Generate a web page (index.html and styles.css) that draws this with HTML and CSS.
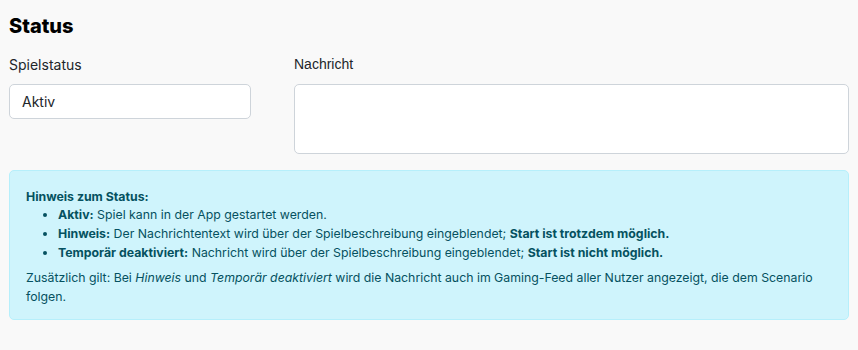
FILE: index.html
```html
<!DOCTYPE html>
<html lang="de">
<head>
  <meta charset="UTF-8">
  <meta name="viewport" content="width=device-width, initial-scale=1.0">
  <title>Status</title>
  <link rel="stylesheet" href="styles.css">
</head>
<body>
  <section class="status">
    <h2>Status</h2>

    <div class="felder">
      <div class="feld">
        <label for="spielstatus">Spielstatus</label>
        <div class="eingabe" id="spielstatus">Aktiv</div>
      </div>
      <div class="feld">
        <label class="label-nachricht" for="nachricht">Nachricht</label>
        <textarea id="nachricht" class="eingabe textfeld"></textarea>
      </div>
    </div>

    <!-- Hinweisbox -->
    <div class="hinweis">
      <strong class="titel">Hinweis zum Status:</strong>
      <ul>
        <li><strong>Aktiv:</strong> Spiel kann in der App gestartet werden.</li>
        <li><strong>Hinweis:</strong> Der Nachrichtentext wird über der Spielbeschreibung eingeblendet; <strong>Start ist trotzdem möglich.</strong></li>
        <li><strong>Temporär deaktiviert:</strong> Nachricht wird über der Spielbeschreibung eingeblendet; <strong>Start ist nicht möglich.</strong></li>
      </ul>
      <p>Zusätzlich gilt: Bei <em>Hinweis</em> und <em>Temporär deaktiviert</em> wird die Nachricht auch im Gaming-Feed aller Nutzer angezeigt, die dem Scenario folgen.</p>
    </div>
  </section>
</body>
</html>
```

FILE: styles.css
```css
body {
  font-family: Inter, "Noto Sans", sans-serif;
  margin: 0;
  background: #f9f9f9;
  color: #212529;
}

.status {
  padding: 14px 9px 0 9px;
}

.status h2 {
  font-size: 20px;
  font-weight: 800;
  margin: 0 0 18px 0;
  color: #000;
  line-height: 24px;
}

.felder {
  display: grid;
  grid-template-columns: 242px 1fr;
  gap: 43px;
}

.feld label {
  display: block;
  font-size: 14px;
  line-height: 17px;
  margin-bottom: 11px;
}

.feld .label-nachricht {
  font-family: "Liberation Sans", Arial, sans-serif;
}

.eingabe {
  box-sizing: border-box;
  display: block;
  width: 100%;
  height: 35px;
  background: white;
  border: 1px solid #ced4da;
  border-radius: 5px;
  padding: 8px 12px;
  font-size: 14px;
  line-height: 17px;
}

.textfeld {
  height: 70px;
  resize: none;
  font-family: inherit;
}

/* Hinweisbox */
.hinweis {
  margin-top: 16px;
  background: #cff4fc;
  border: 1px solid #b6effb;
  border-radius: 5px;
  color: #055160;
  padding: 17px 16px 13px 16px;
  font-size: 12.3px;
  line-height: 19px;
}

.hinweis .titel {
  display: block;
  line-height: 17px;
}

.hinweis ul {
  margin: 0 0 6px 0;
  padding-left: 32px;
}

.hinweis p {
  margin: 0;
}
```
